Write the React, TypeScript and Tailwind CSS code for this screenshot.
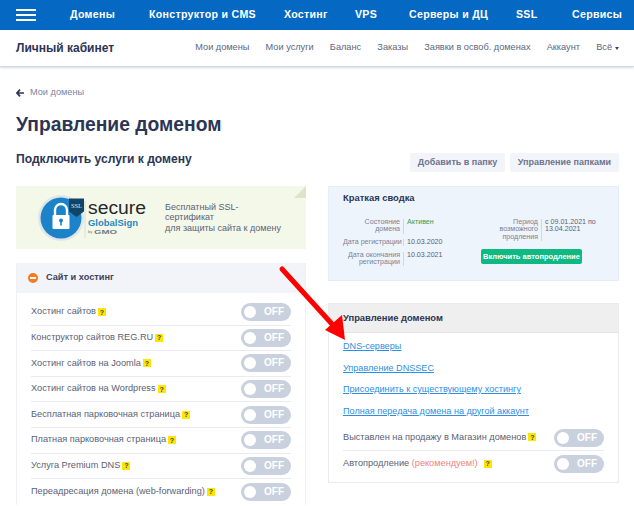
import React from "react";

const font = { fontFamily: '"Liberation Sans", Arial, sans-serif' };

function Q() {
  return (
    <span className="inline-flex h-[8px] w-[8px] shrink-0 items-center justify-center bg-[#ffe600] text-[7px] font-bold leading-none text-[#3a3f55]">?</span>
  );
}

function Toggle() {
  return (
    <span className="flex h-[18px] w-[50px] shrink-0 items-center rounded-full bg-[#c9d1de] pl-[3px]">
      <span className="h-[12px] w-[12px] rounded-full bg-white" />
      <span className="ml-[8px] text-[10px] font-bold leading-none text-white">OFF</span>
    </span>
  );
}

function Row({ label, last }: { label: string; last?: boolean }) {
  return (
    <div className={`flex h-[25.6px] items-center justify-between ${last ? "" : "border-b border-[#e8ebf2]"}`}>
      <span className="flex items-center gap-[2px] whitespace-nowrap text-[9.2px] text-[#5a6178]">
        {label} <Q />
      </span>
      <Toggle />
    </div>
  );
}

function Logo() {
  return (
    <svg width="112" height="48" viewBox="0 0 112 48" className="shrink-0">
      <circle cx="23" cy="24" r="23" fill="#dfe6ea" />
      <circle cx="23" cy="24" r="20.5" fill="#1c83c9" />
      <path d="M17 22v-6a6 6 0 0 1 12 0v6" fill="none" stroke="#fff" strokeWidth="2.4" />
      <rect x="14.5" y="21" width="17" height="14" rx="1" fill="#fff" />
      <circle cx="23" cy="26.5" r="2" fill="#1c83c9" />
      <rect x="22.2" y="27" width="1.6" height="4.5" fill="#1c83c9" />
      <path d="M31 4.5h15v13l-7.5 5.5-7.5-5.5z" fill="#0f4667" />
      <text x="38.5" y="14" textAnchor="middle" fontSize="6.5" fill="#dfeaf0" fontFamily="Liberation Serif, serif">SSL</text>
      <line x1="47" y1="7" x2="47" y2="44" stroke="#cfd4c8" strokeWidth="0.7" />
      <text x="50" y="19.5" fontSize="18" fill="#26292c" fontFamily="Liberation Sans, sans-serif" textLength="58" lengthAdjust="spacingAndGlyphs">secure</text>
      <text x="50" y="31.5" fontSize="8.5" fontWeight="700" fill="#2b86c5" fontFamily="Liberation Sans, sans-serif" textLength="50" lengthAdjust="spacingAndGlyphs">GlobalSign</text>
      <text x="50" y="39" fontSize="4" fill="#6d7b86" fontFamily="Liberation Sans, sans-serif">by</text>
      <text x="56" y="39.5" fontSize="6" fontWeight="700" fill="#6d7b86" fontFamily="Liberation Sans, sans-serif" textLength="23" lengthAdjust="spacingAndGlyphs">GMO</text>
    </svg>
  );
}

function Label({ children, w }: { children: React.ReactNode; w: string }) {
  return <div className={`${w} shrink-0 border-r border-[#c9d9e8] pr-[3px] text-right`}>{children}</div>;
}

export default function App() {
  return (
    <div className="relative h-[506px] w-[634px] overflow-hidden bg-white" style={font}>
      <header className="flex h-[30px] items-center bg-[#0568c2] pl-[16px] pr-[15px]">
        <div className="flex w-[20px] flex-col gap-[2.5px]">
          <span className="h-[2.5px] bg-white" />
          <span className="h-[2.5px] bg-white" />
          <span className="h-[2.5px] bg-white" />
        </div>
        <nav className="ml-[34px] flex flex-1 whitespace-nowrap text-center text-[10.6px] font-bold tracking-[0.3px] text-white">
          <span className="w-[42px]">Домены</span>
          <span className="ml-[37px] w-[99px]">Конструктор и CMS</span>
          <span className="ml-[36px] w-[41px]">Хостинг</span>
          <span className="ml-[30px] w-[20px]">VPS</span>
          <span className="ml-[34px] w-[73px]">Серверы и ДЦ</span>
          <span className="ml-[34px] w-[19px]">SSL</span>
          <span className="ml-[37px] w-[47px]">Сервисы</span>
        </nav>
      </header>

      <div className="flex h-[37px] items-center justify-between border-b border-[#d5d9e4] bg-white pl-[16px] pr-[15px] shadow-[0_1px_2px_rgba(120,130,160,0.3)]">
        <span className="text-[12px] font-bold text-[#2c3554]">Личный кабинет</span>
        <nav className="flex items-center gap-[16.2px] text-[9.2px] text-[#5d6680]">
          <span>Мои домены</span>
          <span>Мои услуги</span>
          <span>Баланс</span>
          <span>Заказы</span>
          <span>Заявки в освоб. доменах</span>
          <span>Аккаунт</span>
          <span className="flex items-center gap-[3px]">
            Всё
            <span className="mt-[1px] h-0 w-0 border-x-[2.5px] border-t-[3px] border-x-transparent border-t-[#3c4460]" />
          </span>
        </nav>
      </div>

      <main className="pl-[16px] pr-[15px]">
        <div className="mt-[19px] flex h-[13px] items-center gap-[6px] text-[9.2px] text-[#7d849c]">
          <svg width="8" height="8" viewBox="0 0 8 8">
            <path d="M4 .6 1 4l3 3.4M1.2 4H8" fill="none" stroke="#2c3554" strokeWidth="1.7" />
          </svg>
          <span>Мои домены</span>
        </div>
        <h1 className="mt-[13px] text-[19.3px] font-bold leading-[26px] text-[#2c3554]">Управление доменом</h1>
        <div className="mt-[12px] flex items-start justify-between">
          <h2 className="whitespace-nowrap text-[12.1px] font-bold leading-[18px] text-[#2c3554]">Подключить услуги к домену</h2>
          <div className="mt-[3px] flex gap-[5px]">
            <span className="flex h-[19px] w-[95px] items-center justify-center rounded-[2px] bg-[#f2f4f9] text-[9px] font-bold text-[#6d7590]">Добавить в папку</span>
            <span className="flex h-[19px] w-[109px] items-center justify-center rounded-[2px] bg-[#f2f4f9] text-[9px] font-bold text-[#6d7590]">Управление папками</span>
          </div>
        </div>

        <div className="mt-[14px] flex items-start justify-between">
          <section className="w-[290px]">
            <div className="relative flex h-[63px] items-center bg-[#f4f8e8] pl-[22px]">
              <Logo />
              <div className="ml-[15px] text-[9px] leading-[10.3px] text-[#5a6178]">
                Бесплатный SSL-<br />сертификат<br />для защиты сайта к домену
              </div>
              <span className="absolute right-0 top-0 h-0 w-0 border-b-[12px] border-l-[12px] border-b-[#dfe3c8] border-l-transparent" />
            </div>

            <div className="mt-[14px] border-x border-[#f0f1f6]">
              <div className="flex h-[30px] items-center gap-[8px] bg-[#f3f4f9] pl-[11px]">
                <span className="flex h-[10px] w-[10px] items-center justify-center rounded-full bg-[#f47b20]">
                  <span className="h-[1.5px] w-[6px] bg-white" />
                </span>
                <span className="text-[9.2px] font-bold text-[#3a4260]">Сайт и хостинг</span>
              </div>
              <div className="px-[14px] pt-[7px]">
                <Row label="Хостинг сайтов" />
                <Row label="Конструктор сайтов REG.RU" />
                <Row label="Хостинг сайтов на Joomla" />
                <Row label="Хостинг сайтов на Wordpress" />
                <Row label="Бесплатная парковочная страница" />
                <Row label="Платная парковочная страница" />
                <Row label="Услуга Premium DNS" />
                <Row label="Переадресация домена (web-forwarding)" last />
              </div>
            </div>
          </section>

          <section className="w-[291px]">
            <div className="h-[95px] border border-[#e3eef8] bg-[#eef4fb] pl-[14px] pt-[4px]">
              <div className="text-[9.4px] font-bold leading-[14px] text-[#2c3554]">Краткая сводка</div>
              <div className="mt-[14px] flex text-[7.1px] leading-[7.3px] text-[#7a8195]">
                <div className="flex w-[140px] flex-col gap-[5.5px]">
                  <div className="flex">
                    <Label w="w-[61px]"><p>Состояние домена</p></Label>
                    <span className="pl-[3px] text-[#2f9e5b]">Активен</span>
                  </div>
                  <div className="flex">
                    <Label w="w-[61px]"><span className="whitespace-nowrap">Дата регистрации</span></Label>
                    <span className="pl-[3px] text-[#5a6178]">10.03.2020</span>
                  </div>
                  <div className="flex">
                    <Label w="w-[61px]">Дата окончания регистрации</Label>
                    <span className="pl-[3px] text-[#5a6178]">10.03.2021</span>
                  </div>
                </div>
                <div className="ml-[-1px] flex flex-col">
                  <div className="flex">
                    <Label w="w-[60px]">Период возможного продления</Label>
                    <span className="w-[58px] pl-[3px] text-[#5a6178]">с 09.01.2021 по 13.04.2021</span>
                  </div>
                  <span className="ml-[-1px] mt-[8px] flex h-[15px] w-[101px] items-center justify-center whitespace-nowrap rounded-[2px] bg-[#10b981] text-[7.5px] font-bold text-white">Включить автопродление</span>
                </div>
              </div>
            </div>

            <div className="mt-[22px] border border-[#e9ebee]">
              <div className="flex h-[29px] items-center border-b border-[#e3e3e3] bg-[#efefef] pl-[14px] text-[9.4px] font-bold text-[#2c3554]">Управление доменом</div>
              <div className="px-[14px] pt-[3px] pb-[5px]">
                <div className="flex flex-col items-start text-[9.1px] leading-[21.5px] text-[#2c8fe6] underline">
                  <a>DNS-серверы</a>
                  <a>Управление DNSSEC</a>
                  <a>Присоединить к существующему хостингу</a>
                  <a>Полная передача домена на другой аккаунт</a>
                </div>
                <div className="mt-[3px] flex h-[26px] items-center justify-between border-b border-[#e8ebf2]">
                  <span className="flex items-center gap-[2px] whitespace-nowrap text-[9.2px] text-[#5a6178]">Выставлен на продажу в Магазин доменов <Q /></span>
                  <Toggle />
                </div>
                <div className="flex h-[26px] items-center justify-between">
                  <span className="flex items-center whitespace-nowrap text-[9.2px] text-[#5a6178]">
                    Автопродление&nbsp;<span className="text-[#f27f7f]">(рекомендуем!)</span>
                    <span className="ml-[6px] flex"><Q /></span>
                  </span>
                  <Toggle />
                </div>
              </div>
            </div>
          </section>
        </div>
      </main>

      <svg className="pointer-events-none absolute left-[270px] top-[260px]" width="85" height="90" viewBox="0 0 85 90">
        <line x1="12" y1="9" x2="62" y2="64" stroke="#ff0000" strokeWidth="5" strokeLinecap="round" />
        <path d="M75 80 55 70 72 55z" fill="#ff0000" />
      </svg>
    </div>
  );
}
